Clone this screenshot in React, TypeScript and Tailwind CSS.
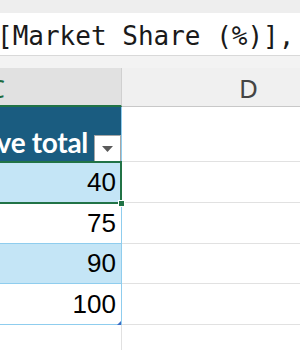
import React from "react";

const rows = [
  { v: "40", fill: true, h: "h-[41px]" },
  { v: "75", fill: false, h: "h-[41px]" },
  { v: "90", fill: true, h: "h-[40px]" },
  { v: "100", fill: false, h: "h-[41px]" },
];

export default function App() {
  return (
    <div className="relative w-[300px] h-[350px] overflow-hidden bg-white flex flex-col">
      <div className="h-[13px] bg-[#eeeeee] shrink-0" />
      <div className="h-[43px] bg-white shrink-0 border-b border-[#d9d9d9] flex items-end overflow-hidden">
        <div
          className="whitespace-pre text-[26px] leading-none text-[#1a1a1a] ml-[-3px] mb-[6px]"
          style={{ fontFamily: '"DejaVu Sans Mono", "Liberation Mono", monospace' }}
        >
          [Market Share (%)],
        </div>
      </div>
      <div className="h-[12px] bg-[#f3f3f3] shrink-0" />
      {/* column headers */}
      <div className="h-[39px] flex shrink-0">
        <div
          className="w-[122px] bg-[#e1e1e1] border-b-2 border-[#217346] border-r border-r-[#d0d0d0] flex items-center justify-end pr-[116px] pt-[3px] text-[26px] text-[#1d6b3f]"
          style={{ fontFamily: '"Noto Sans", "Open Sans", sans-serif' }}
        >
          C
        </div>
        <div
          className="flex-1 bg-[#f0f0f0] border-b border-[#c8c8c8] flex items-center justify-end pr-[42px] pt-[3px] text-[26px] text-[#444444]"
          style={{ fontFamily: '"Noto Sans", "Open Sans", sans-serif' }}
        >
          D
        </div>
      </div>
      {/* table header row */}
      <div className="h-[55px] flex shrink-0">
        <div className="w-[122px] bg-[#1a5c80] border-r border-[#8fcdee] flex items-end justify-end pt-1 overflow-hidden">
          <span
            className="text-white font-bold text-[28px] leading-none mb-[6px] mr-[6px] whitespace-nowrap tracking-[-0.3px]"
            style={{ fontFamily: 'Lato, "Open Sans", sans-serif' }}
          >
            ve total
          </span>
          <div className="w-[27px] h-[27px] shrink-0 bg-white border border-[#a6a6a6] border-b-0 flex items-center justify-center">
            <svg width="11" height="6" viewBox="0 0 11 6">
              <path d="M0 0 H11 L5.5 6 Z" fill="#5a5a5a" />
            </svg>
          </div>
        </div>
        <div className="flex-1 border-b border-[#e1e1e1]" />
      </div>
      {rows.map((r, i) => (
        <div key={i} className={`${r.h} flex shrink-0`}>
          <div
            className={`w-[122px] border-r border-b border-[#8fcdee] flex items-end justify-end pr-[5px] pb-[7px] text-[26px] leading-none text-black ${
              r.fill ? "bg-[#c4e5f6]" : "bg-white"
            }`}
            style={{ fontFamily: '"Liberation Sans", Arial, sans-serif' }}
          >
            {r.v}
          </div>
          <div className="flex-1 border-b border-[#e1e1e1]" />
        </div>
      ))}
      <div className="flex-1 flex">
        <div className="w-[122px] border-r border-[#e1e1e1]" />
      </div>
      {/* selection border on C2 */}
      <div className="absolute left-[-4px] top-[161px] w-[126px] h-[43px] border-2 border-[#217346] pointer-events-none" />
      <div className="absolute left-[118px] top-[200px] w-[7px] h-[7px] bg-[#217346] border border-white" />
      {/* resize handle */}
      <svg className="absolute left-[117px] top-[321px]" width="4" height="4" viewBox="0 0 4 4">
        <path d="M4 0 V4 H0 Z" fill="#3b6cc4" />
      </svg>
    </div>
  );
}
